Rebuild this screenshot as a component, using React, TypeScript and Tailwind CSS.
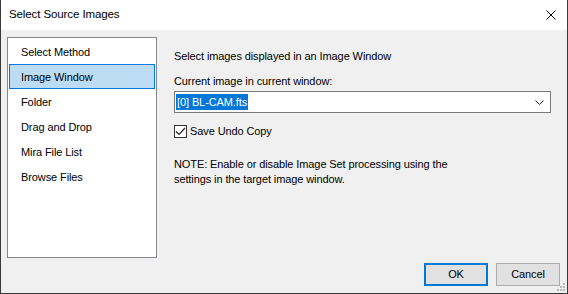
import { useState } from 'react';

const methods = ['Select Method', 'Image Window', 'Folder', 'Drag and Drop', 'Mira File List', 'Browse Files'];

function App() {
  const [selected, setSelected] = useState(1);
  const [saveUndo, setSaveUndo] = useState(true);

  return (
    <div className="h-[294px] w-[568px] overflow-hidden bg-[#1e1e1e] font-['Liberation_Sans',sans-serif] text-[11px] tracking-[-0.1px] text-black">
      <div className="flex h-[294px] w-[568px] flex-col border-x border-b border-[#3a3a3a] bg-[#f0f0f0]">
        {/* Title bar */}
        <div className="flex h-[30px] shrink-0 items-center justify-between bg-white pl-[8px] pr-[10px]">
          <span className="text-[11.5px] leading-none">Select Source Images</span>
          <svg width="10" height="10" viewBox="0 0 10 10" className="mr-[1px] mt-[-1px]">
            <path d="M0.5 0.5 L9.5 9.5 M9.5 0.5 L0.5 9.5" stroke="#000" strokeWidth="1" fill="none" />
          </svg>
        </div>

        {/* Body */}
        <div className="flex flex-1 flex-col px-[6px]">
          <div className="mt-[7px] flex">
            {/* Method list */}
            <div className="h-[221px] w-[150px] shrink-0 border border-[#828790] bg-white p-px">
              {methods.map((m, i) => (
                <div
                  key={m}
                  onClick={() => setSelected(i)}
                  className={
                    i === selected
                      ? 'flex h-[25px] items-center border border-[#0078d7] bg-[#bcdcf4] pl-[11px] pt-[2px]'
                      : 'flex h-[25px] items-center border border-transparent pl-[11px] pt-[2px]'
                  }
                >
                  {m}
                </div>
              ))}
            </div>

            {/* Right panel */}
            <div className="ml-[17px] flex w-[377px] flex-col pt-[12px]">
              <div className="leading-[15px]">Select images displayed in an Image Window</div>
              <div className="mt-[10px] leading-[15px]">Current image in current window:</div>
              <div className="mt-[2px] flex h-[22px] items-center border border-[#7a7a7a] bg-white pl-[1px] pr-[6px]">
                <span className="flex h-[16px] items-center bg-[#0078d7] px-[1px] text-white">[0] BL-CAM.fts</span>
                <svg width="9" height="5" viewBox="0 0 9 5" className="ml-auto">
                  <path d="M0.5 0.5 L4.5 4.5 L8.5 0.5" stroke="#222" strokeWidth="1" fill="none" />
                </svg>
              </div>
              <label className="mt-[11px] flex items-center" onClick={() => setSaveUndo(!saveUndo)}>
                <span className="flex h-[13px] w-[13px] items-center justify-center border border-[#333] bg-white">
                  {saveUndo && (
                    <svg width="11" height="9" viewBox="0 0 11 9">
                      <path d="M1 4.5 L4 7.5 L10 1" stroke="#222" strokeWidth="1.2" fill="none" />
                    </svg>
                  )}
                </span>
                <span className="ml-[3px] leading-[15px]">Save Undo Copy</span>
              </label>
              <div className="mt-[18px] leading-[15px]">
                NOTE: Enable or disable Image Set processing using the
                <br />
                settings in the target image window.
              </div>
            </div>
          </div>

          {/* Buttons */}
          <div className="relative mt-[5px] flex justify-end gap-[8px] pr-[1px]">
            <button className="h-[23px] w-[64px] border-2 border-[#0078d7] bg-[#e1e1e1]">OK</button>
            <button className="h-[23px] w-[64px] border border-[#adadad] bg-[#e1e1e1]">Cancel</button>
            <svg width="10" height="10" viewBox="0 0 10 10" className="absolute right-[-5px] top-[19px]">
              <rect x="7" y="1" width="2" height="2" fill="#b8b8b8" />
              <rect x="4" y="4" width="2" height="2" fill="#b8b8b8" />
              <rect x="7" y="4" width="2" height="2" fill="#b8b8b8" />
              <rect x="1" y="7" width="2" height="2" fill="#b8b8b8" />
              <rect x="4" y="7" width="2" height="2" fill="#b8b8b8" />
              <rect x="7" y="7" width="2" height="2" fill="#b8b8b8" />
            </svg>
          </div>
        </div>
      </div>
    </div>
  );
}

export default App;
